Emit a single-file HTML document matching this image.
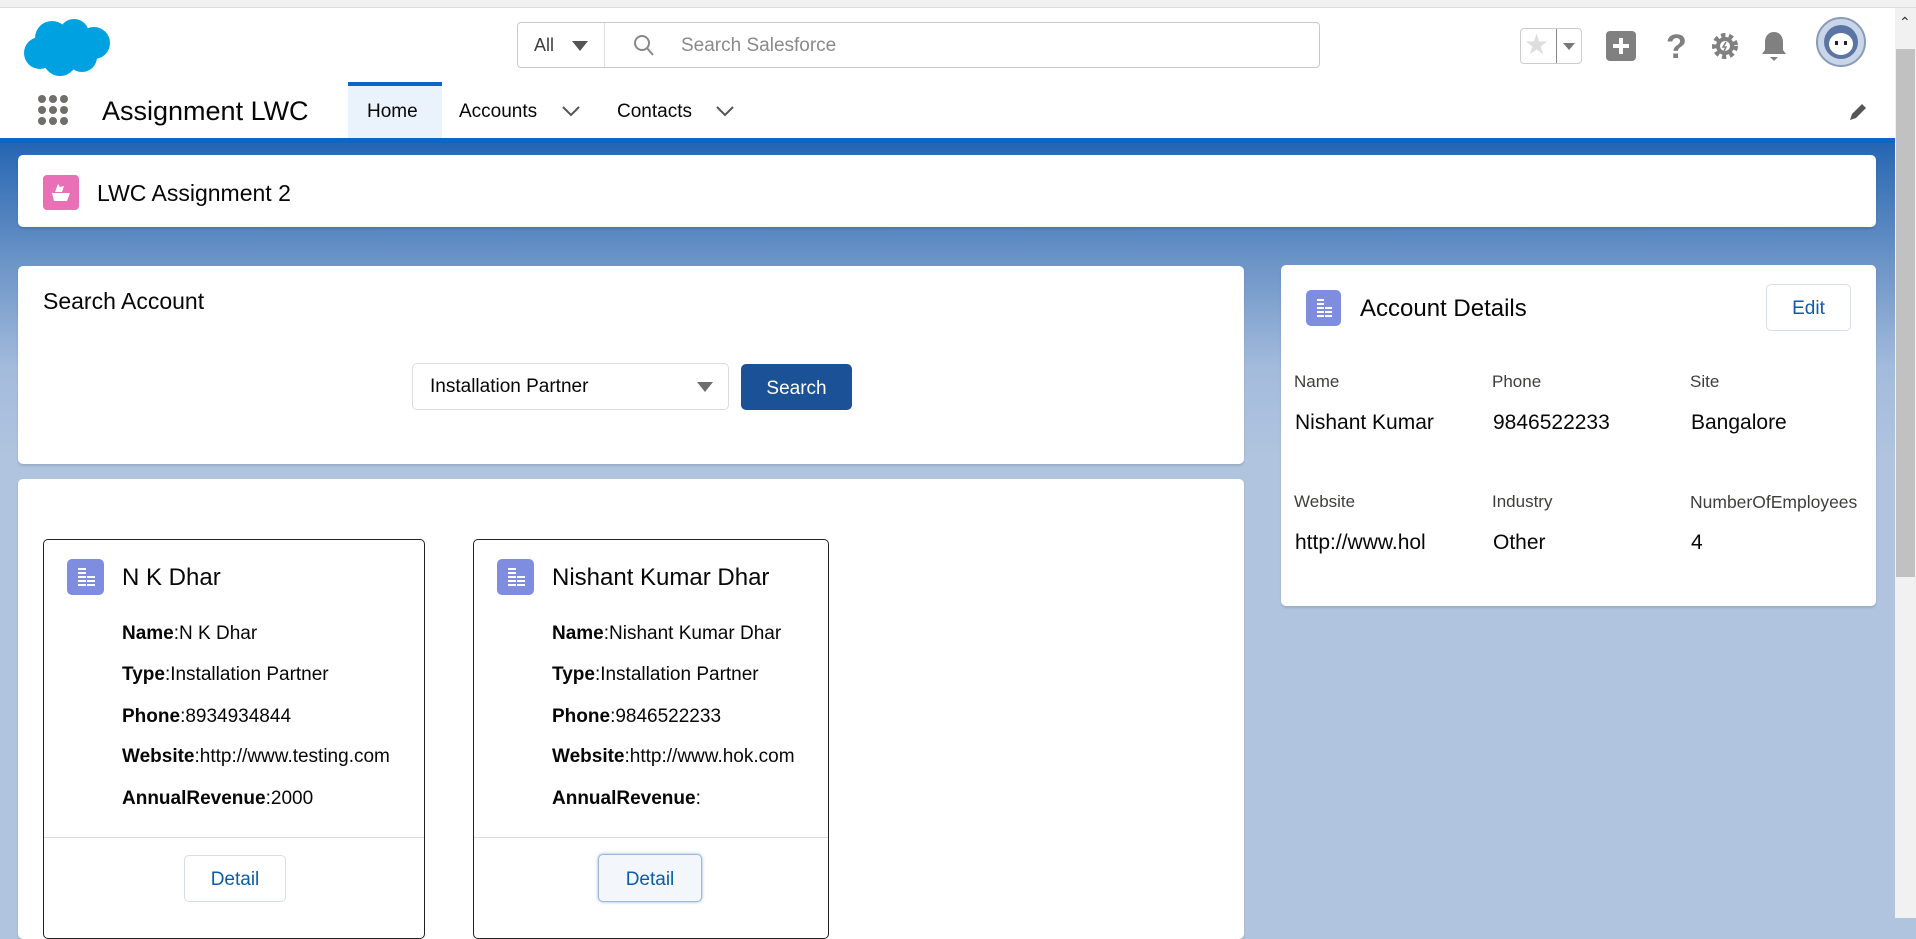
<!DOCTYPE html>
<html><head><meta charset="utf-8"><style>
*{box-sizing:border-box;margin:0;padding:0}
body{width:1916px;height:918px;overflow:hidden;position:relative;font-family:"Liberation Sans",sans-serif;color:#080707;background:#b0c4df}
.a{position:absolute}
.bg{left:0;top:138px;width:1895px;height:780px;background:linear-gradient(#1f62b4 0px,#2f6cb5 20px,#6f96c8 130px,#a3bbdc 230px,#b0c4df 320px,#b0c4df)}
.card{background:#fff;border-radius:5px;box-shadow:0 2px 2px rgba(0,0,0,.12)}
.ic{background:#7f8de1;border-radius:5px}
.ic::before{content:"";position:absolute;left:30%;top:25%;width:22%;height:50%;background:repeating-linear-gradient(#fff 0 2px,transparent 2px 4px)}
.ic::after{content:"";position:absolute;left:55%;top:48%;width:20%;height:27%;background:repeating-linear-gradient(#fff 0 2px,transparent 2px 4px)}
.lbl{font-size:17px;color:#3e3e3c}
.val{font-size:21px}
.f{font-size:19px;left:122px;position:absolute;white-space:nowrap}
.f b{font-weight:bold}
.btn{border:1px solid #d8dde6;border-radius:5px;background:#fff;color:#0b5cab;font-size:19px;display:flex;align-items:center;justify-content:center}
</style></head><body>
<div class="a" style="left:0;top:0;width:1916px;height:8px;background:#f1f1f1;border-bottom:1px solid #ddd"></div>
<div class="a" style="left:0;top:8px;width:1895px;height:130px;background:#fff"></div>
<div class="a bg"></div>
<div class="a" style="left:0;top:138px;width:1895px;height:5px;background:#0b66c6"></div>
<div class="a" style="left:1895px;top:8px;width:21px;height:910px;background:#f1f1f1"></div>
<div class="a" style="left:1896px;top:49px;width:19px;height:528px;background:#c1c1c1"></div>
<div class="a" style="left:1899px;top:14px;font-size:14px;color:#333">&#8963;</div>
<svg class="a" style="left:22px;top:17px" width="90" height="60" viewBox="0 0 90 60"><g fill="#00a1e0"><circle cx="30" cy="21" r="17"/><circle cx="52" cy="17" r="15"/><circle cx="72" cy="26" r="16"/><circle cx="18" cy="36" r="16"/><circle cx="38" cy="42" r="17"/><circle cx="60" cy="40" r="15"/></g></svg>
<div class="a" style="left:517px;top:22px;width:803px;height:46px;border:1px solid #c9c9c9;border-radius:4px;background:#fff"></div>
<div class="a" style="left:604px;top:23px;width:1px;height:44px;background:#ddd"></div>
<div class="a" style="left:534px;top:35px;font-size:18px;color:#3e3e3c">All</div>
<div class="a" style="left:572px;top:41px;width:0;height:0;border-left:8px solid transparent;border-right:8px solid transparent;border-top:10px solid #555"></div>
<svg class="a" style="left:633px;top:34px" width="22" height="24"><circle cx="9" cy="9" r="7" fill="none" stroke="#888" stroke-width="2"/><path d="M14 14l6 7" stroke="#888" stroke-width="2"/></svg>
<div class="a" style="left:681px;top:35px;font-size:19px;color:#8a8a8a">Search Salesforce</div>
<div class="a" style="left:1520px;top:28px;width:62px;height:36px;border:1px solid #ccc;border-radius:4px;background:#fff"></div>
<div class="a" style="left:1556px;top:29px;width:1px;height:34px;background:#888"></div>
<div class="a" style="left:1524px;top:28px;font-size:28px;color:#ddd">★</div>
<div class="a" style="left:1563px;top:43px;border-left:6px solid transparent;border-right:6px solid transparent;border-top:7px solid #777"></div>
<div class="a" style="left:1606px;top:31px;width:30px;height:30px;background:#808080;border-radius:4px"></div>
<div class="a" style="left:1613px;top:44px;width:16px;height:4px;background:#fff"></div>
<div class="a" style="left:1619px;top:38px;width:4px;height:16px;background:#fff"></div>
<div class="a" style="left:1666px;top:28px;font-size:34px;font-weight:bold;color:#808080">?</div>
<svg class="a" style="left:1711px;top:32px" width="28" height="28" viewBox="0 0 28 28"><circle cx="14" cy="14" r="10" fill="none" stroke="#808080" stroke-width="6" stroke-dasharray="4 3.2"/><circle cx="14" cy="14" r="9" fill="#808080"/><circle cx="14" cy="14" r="5" fill="#fff"/><path d="M15 10l-3 5h3l-2 4" stroke="#808080" stroke-width="1.5" fill="none"/></svg>
<svg class="a" style="left:1760px;top:30px" width="28" height="32" viewBox="0 0 28 32"><path d="M14 2c-6 0-9 5-9 10v8l-3 4h24l-3-4v-8c0-5-3-10-9-10z" fill="#808080"/><path d="M10 27h8l-4 4z" fill="#808080"/></svg>
<div class="a" style="left:1816px;top:17px;width:50px;height:50px;border-radius:50%;background:#c9d6ea;border:2px solid #8a9bb5;overflow:hidden">
<div class="a" style="left:6px;top:6px;width:34px;height:34px;border-radius:50%;background:#5a75a3"></div>
<div class="a" style="left:11px;top:14px;width:24px;height:22px;border-radius:50%;background:#fff"></div>
<div class="a" style="left:17px;top:22px;width:3px;height:4px;background:#222"></div>
<div class="a" style="left:26px;top:22px;width:3px;height:4px;background:#222"></div>
</div>
<svg class="a" style="left:37px;top:94px" width="32" height="32"><g fill="#706e6b"><circle cx="5" cy="5" r="4"/><circle cx="16" cy="5" r="4"/><circle cx="27" cy="5" r="4"/><circle cx="5" cy="16" r="4"/><circle cx="16" cy="16" r="4"/><circle cx="27" cy="16" r="4"/><circle cx="5" cy="27" r="4"/><circle cx="16" cy="27" r="4"/><circle cx="27" cy="27" r="4"/></g></svg>
<div class="a" style="left:102px;top:96px;font-size:27px">Assignment LWC</div>
<div class="a" style="left:348px;top:82px;width:94px;height:56px;background:#eaf2fb;border-top:4px solid #0b66c6"></div>
<div class="a" style="left:367px;top:101px;font-size:19px">Home</div>
<div class="a" style="left:459px;top:101px;font-size:19px">Accounts</div>
<svg class="a" style="left:561px;top:104px" width="20" height="14"><path d="M2 3l8 8 8-8" stroke="#555" stroke-width="2" fill="none"/></svg>
<div class="a" style="left:617px;top:101px;font-size:19px">Contacts</div>
<svg class="a" style="left:715px;top:104px" width="20" height="14"><path d="M2 3l8 8 8-8" stroke="#555" stroke-width="2" fill="none"/></svg>
<svg class="a" style="left:1848px;top:102px" width="20" height="20"><path d="M2 18l2-6 10-10 4 4-10 10z" fill="#555"/></svg>
<div class="a card" style="left:18px;top:155px;width:1858px;height:72px"></div>
<div class="a" style="left:43px;top:175px;width:36px;height:35px;background:#e96fb6;border-radius:4px"></div>
<svg class="a" style="left:49px;top:181px" width="24" height="24"><path d="M3 12h18l-3 8H5z" fill="#fff"/><path d="M6 11l3-8 2 3 4-1-2 6z" fill="#fff"/></svg>
<div class="a" style="left:97px;top:180px;font-size:23px">LWC Assignment 2</div>
<div class="a card" style="left:18px;top:266px;width:1226px;height:198px"></div>
<div class="a" style="left:43px;top:288px;font-size:23px">Search Account</div>
<div class="a" style="left:412px;top:363px;width:317px;height:47px;border:1px solid #ddd;border-radius:5px;background:#fff"></div>
<div class="a" style="left:430px;top:376px;font-size:19px">Installation Partner</div>
<div class="a" style="left:697px;top:382px;border-left:8px solid transparent;border-right:8px solid transparent;border-top:10px solid #706e6b"></div>
<div class="a" style="left:741px;top:364px;width:111px;height:46px;background:#1b5297;border-radius:5px;color:#fff;font-size:19px;display:flex;align-items:center;justify-content:center;padding-top:3px">Search</div>
<div class="a card" style="left:18px;top:479px;width:1226px;height:460px"></div>
<div class="a" style="left:43px;top:539px;width:382px;height:400px;border:1px solid #222;border-radius:5px;background:#fff">
<div class="a ic" style="left:23px;top:19px;width:37px;height:36px"></div>
<div class="a" style="left:78px;top:24px;font-size:24px">N K Dhar</div>
<div class="f" style="left:78px;top:83px"><b>Name</b>:N K Dhar</div>
<div class="f" style="left:78px;top:124px"><b>Type</b>:Installation Partner</div>
<div class="f" style="left:78px;top:166px"><b>Phone</b>:8934934844</div>
<div class="f" style="left:78px;top:206px"><b>Website</b>:http://www.testing.com</div>
<div class="f" style="left:78px;top:248px"><b>AnnualRevenue</b>:2000</div>
<div class="a" style="left:0;top:297px;width:380px;height:1px;background:#ddd"></div>
<div class="a btn" style="left:140px;top:315px;width:102px;height:47px;padding-top:2px">Detail</div>
</div>
<div class="a" style="left:473px;top:539px;width:356px;height:400px;border:1px solid #222;border-radius:5px;background:#fff">
<div class="a ic" style="left:23px;top:19px;width:37px;height:36px"></div>
<div class="a" style="left:78px;top:24px;font-size:24px">Nishant Kumar Dhar</div>
<div class="f" style="left:78px;top:83px"><b>Name</b>:Nishant Kumar Dhar</div>
<div class="f" style="left:78px;top:124px"><b>Type</b>:Installation Partner</div>
<div class="f" style="left:78px;top:166px"><b>Phone</b>:9846522233</div>
<div class="f" style="left:78px;top:206px"><b>Website</b>:http://www.hok.com</div>
<div class="f" style="left:78px;top:248px"><b>AnnualRevenue</b>:</div>
<div class="a" style="left:0;top:297px;width:354px;height:1px;background:#ddd"></div>
<div class="a btn" style="left:124px;top:314px;width:104px;height:48px;background:#f3f6fa;border-color:#9fb7d6;box-shadow:0 0 3px #8fb0e0;padding-top:3px">Detail</div>
</div>
<div class="a card" style="left:1281px;top:265px;width:595px;height:341px"></div>
<div class="a ic" style="left:1306px;top:290px;width:35px;height:36px"></div>
<div class="a" style="left:1360px;top:295px;font-size:24px">Account Details</div>
<div class="a btn" style="left:1766px;top:284px;width:85px;height:47px;padding-top:2px">Edit</div>
<div class="a lbl" style="left:1294px;top:372px">Name</div>
<div class="a lbl" style="left:1492px;top:372px">Phone</div>
<div class="a lbl" style="left:1690px;top:372px">Site</div>
<div class="a val" style="left:1295px;top:411px">Nishant Kumar</div>
<div class="a val" style="left:1493px;top:411px">9846522233</div>
<div class="a val" style="left:1691px;top:411px">Bangalore</div>
<div class="a lbl" style="left:1294px;top:492px">Website</div>
<div class="a lbl" style="left:1492px;top:492px">Industry</div>
<div class="a lbl" style="left:1690px;top:492px;font-size:17.5px">NumberOfEmployees</div>
<div class="a val" style="left:1295px;top:531px;width:149px;overflow:hidden;white-space:nowrap">http://www.hol</div>
<div class="a val" style="left:1493px;top:531px">Other</div>
<div class="a val" style="left:1691px;top:531px">4</div>
</body></html>
